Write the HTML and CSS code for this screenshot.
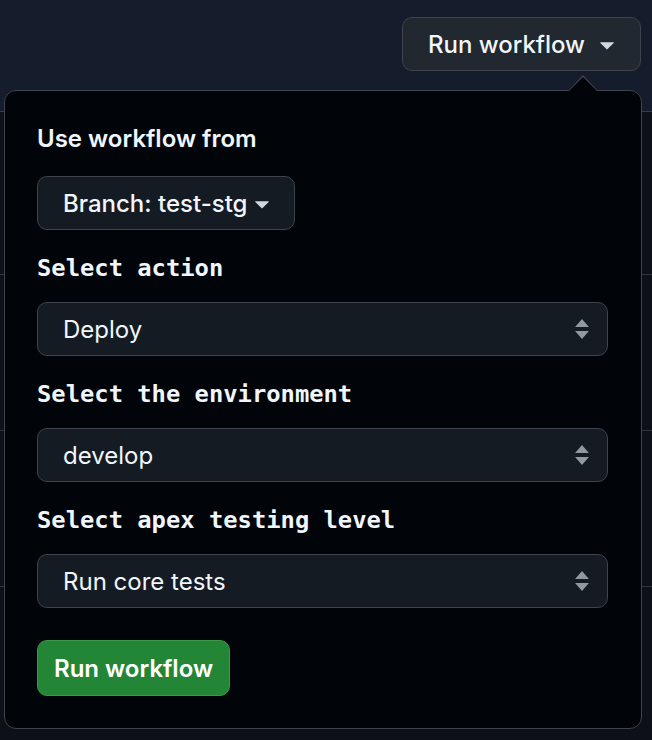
FILE: index.html
```html
<!DOCTYPE html>
<html lang="en">
    <head>
        <meta charset="utf-8">
        <title>Run workflow</title>
        <link rel="stylesheet" href="styles.css">
    </head>
    <body>
        <header class="page-header">
            <button class="dispatch-btn">
                Run workflow
                <svg class="caret" viewBox="0 0 16 16" width="30" height="30"><path d="m4.427 7.427 3.396 3.396a.25.25 0 0 0 .354 0l3.396-3.396A.25.25 0 0 0 11.396 7H4.604a.25.25 0 0 0-.177.427Z"/></svg>
            </button>
        </header>

        <ul class="runs">
            <li class="run-row first"></li>
            <li class="run-row"></li>
            <li class="run-row"></li>
            <li class="run-row"></li>
        </ul>

        <!-- dropdown opened from the Run workflow button -->
        <form class="dispatch-menu">
            <h3 class="menu-title">Use workflow from</h3>
            <button type="button" class="branch-btn">
                Branch: test-stg
                <svg class="caret" viewBox="0 0 16 16" width="30" height="30"><path d="m4.427 7.427 3.396 3.396a.25.25 0 0 0 .354 0l3.396-3.396A.25.25 0 0 0 11.396 7H4.604a.25.25 0 0 0-.177.427Z"/></svg>
            </button>

            <div class="field">
                <label class="field-label">Select action</label>
                <div class="select">Deploy</div>
            </div>

            <div class="field">
                <label class="field-label">Select the environment</label>
                <div class="select">develop</div>
            </div>

            <div class="field">
                <label class="field-label">Select apex testing level</label>
                <div class="select">Run core tests</div>
            </div>

            <button type="button" class="submit-btn">Run workflow</button>
        </form>
    </body>
</html>
```

FILE: styles.css
```css
body {
    margin: 0;
    background-color: #0d1117;
    font-family: Inter, 'Noto Sans', 'Liberation Sans', sans-serif;
    color: #f0f6fc;
    position: relative;
}

.page-header {
    height: 112px;
    background-color: #151c2b;
    border-bottom: 1px solid #24416b;
    display: flex;
    justify-content: flex-end;
    align-items: flex-start;
    padding: 17px 11px 0 0;
    box-sizing: border-box;
}

.dispatch-btn,
.branch-btn {
    display: flex;
    align-items: center;
    gap: 7px;
    height: 54px;
    padding: 0 18px 0 25px;
    background-color: #212830;
    color: #f0f6fc;
    border: 1px solid #3d444d;
    border-radius: 10px;
    font-family: inherit;
    font-size: 24px;
    font-weight: 500;
}

.caret {
    fill: #d1d7e0;
}

.runs {
    list-style: none;
    margin: 0;
    padding: 0;
}

.run-row {
    height: 155px;
    border-bottom: 1px solid #30363d;
}

.run-row.first {
    height: 162px;
}

/* dropdown panel */
.dispatch-menu {
    position: absolute;
    top: 90px;
    left: 4px;
    width: 638px;
    box-sizing: border-box;
    padding: 30px 33px 32px 32px;
    background-color: #010409;
    border: 1px solid #3d444d;
    border-radius: 12px;
    margin: 0;
}

.dispatch-menu::before,
.dispatch-menu::after {
    content: "";
    position: absolute;
    right: 43px;
    border: 15px solid transparent;
    border-top: none;
}

.dispatch-menu::before {
    top: -16px;
    border-bottom: 16px solid #3d444d;
}

.dispatch-menu::after {
    top: -14px;
    border-bottom: 15px solid #010409;
}

.menu-title {
    margin: 0 0 19px;
    font-size: 24px;
    line-height: 36px;
    font-weight: 600;
}

.branch-btn {
    background-color: #151b23;
    gap: 0;
    padding: 0 17px 0 25px;
    margin-bottom: 20px;
}

.field {
    margin-bottom: 20px;
}

.field-label {
    display: block;
    font-family: 'DejaVu Sans Mono', 'Liberation Mono', monospace;
    font-weight: bold;
    font-size: 23.8px;
    line-height: 36px;
    margin-bottom: 16px;
}

.select {
    height: 54px;
    box-sizing: border-box;
    display: flex;
    align-items: center;
    padding: 0 25px;
    background-color: #151b23;
    border: 1px solid #3d444d;
    border-radius: 10px;
    font-size: 24px;
    background-image: url("data:image/svg+xml,%3Csvg xmlns='http://www.w3.org/2000/svg' width='16' height='20' viewBox='0 0 8 10'%3E%3Cpath fill='%239198a1' d='M4 0L7.46 4H.54L4 0ZM4 10L.54 6H7.46L4 10Z'/%3E%3C/svg%3E");
    background-repeat: no-repeat;
    background-position: right 17px center;
    background-size: 16px 20px;
}

.submit-btn {
    margin-top: 12px;
    height: 56px;
    padding: 0 16px;
    background-color: #238636;
    color: #ffffff;
    border: 1px solid #3a9848;
    border-radius: 10px;
    font-family: inherit;
    font-size: 24px;
    font-weight: 600;
}
```
